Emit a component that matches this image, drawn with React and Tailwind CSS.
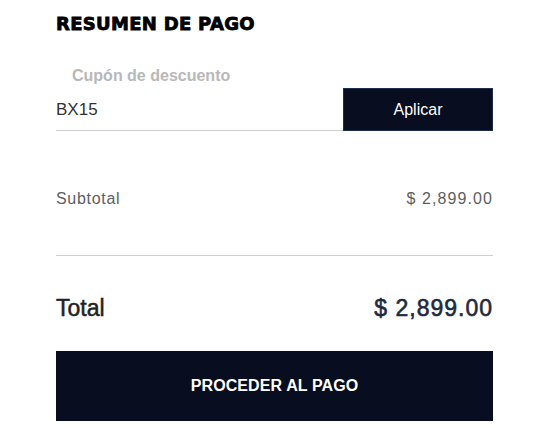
import React, { useState } from 'react'

const PaymentSummary = () => {
  const [coupon, setCoupon] = useState('BX15')
  const subtotal = '$ 2,899.00'
  const total = '$ 2,899.00'

  return (
    <div className="w-[437px] ml-[56px] pt-[12px]" style={{ fontFamily: '"Liberation Sans", Arial, sans-serif' }}>
      {/* HEADER */}
      <h2
        className="text-[18px] leading-[24px] font-black tracking-[0.3px] text-black"
        style={{ fontFamily: '"DejaVu Sans", sans-serif', WebkitTextStroke: '0.8px black' }}
      >
        RESUMEN DE PAGO
      </h2>

      {/* COUPON */}
      <div className="mt-[31px] pl-[16px] text-[16px] leading-[18px] font-bold text-[#b8b8b8]">Cupón de descuento</div>
      <div className="flex items-end mt-[3px]">
        <input
          type="text"
          value={coupon}
          onChange={(e) => setCoupon(e.target.value)}
          className="flex-1 h-[43px] pt-[1px] text-[17px] text-[#333] border-b border-[#cfcfcf] outline-none bg-transparent"
        />
        <button className="w-[150px] h-[43px] bg-[#080d20] border border-[#1d2f4a] text-white text-[16px]">
          Aplicar
        </button>
      </div>

      {/* SUBTOTAL */}
      <div className="flex justify-between items-center mt-[59px] text-[16px] leading-[18px] text-[#5e5e5e]">
        <span className="tracking-[0.7px]">Subtotal</span>
        <span className="tracking-[1.1px]">{subtotal}</span>
      </div>
      <div className="mt-[47px] border-t border-[#cfcfcf]" />

      {/* TOTAL */}
      <div className="flex justify-between items-center mt-[39px] text-[23px] leading-[26px]">
        <span className="text-[#222]" style={{ WebkitTextStroke: '0.5px #222' }}>Total</span>
        <span className="text-[#1e2a3f] tracking-[1px]" style={{ WebkitTextStroke: '0.6px #1e2a3f' }}>{total}</span>
      </div>

      {/* CHECKOUT BUTTON */}
      <button className="mt-[30px] w-full h-[70px] bg-[#080d20] text-white text-[16px] font-bold tracking-[0.1px]">
        PROCEDER AL PAGO
      </button>
    </div>
  )
}

export default function App() {
  return (
    <div className="w-[546px] h-[428px] bg-white overflow-hidden">
      <PaymentSummary />
    </div>
  )
}
